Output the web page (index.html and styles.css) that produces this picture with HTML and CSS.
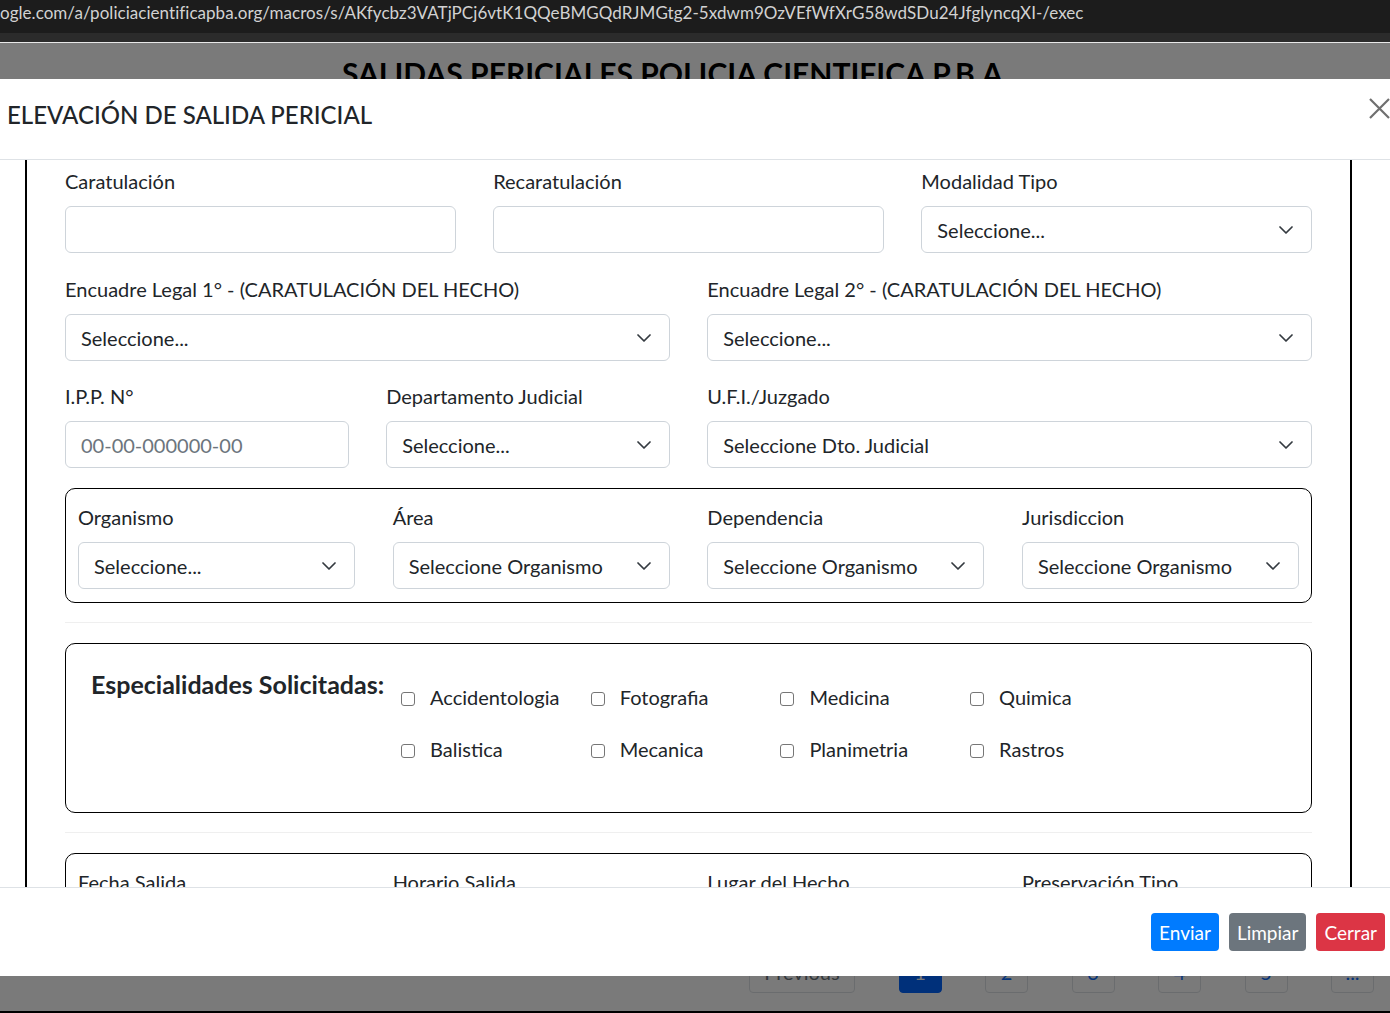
FILE: index.html
```html
<!DOCTYPE html>
<html lang="es">
<head>
<meta charset="utf-8">
<title>Elevación de Salida Pericial</title>
<link rel="stylesheet" href="styles.css">
</head>
<body>
<div class="urlbar"><span class="url">ogle.com/a/policiacientificapba.org/macros/s/AKfycbz3VATjPCj6vtK1QQeBMGQdRJMGtg2-5xdwm9OzVEfWfXrG58wdSDu24JfglyncqXI-/exec</span></div>
<div class="tabstrip"></div>
<div class="viewport">
  <div class="page">
    <h1 class="page-title">SALIDAS PERICIALES POLICIA CIENTIFICA P.B.A</h1>
    <nav class="pagination">
      <span class="pg pg-prev">Previous</span>
      <span class="pg pg-active">1</span>
      <span class="pg">2</span>
      <span class="pg">3</span>
      <span class="pg">4</span>
      <span class="pg">5</span>
      <span class="pg">...</span>
    </nav>
  </div>
  <div class="backdrop"></div>
  <div class="modal">
    <div class="modal-header">
      <h5 class="modal-title">ELEVACIÓN DE SALIDA PERICIAL</h5>
      <span class="close"><svg width="21" height="21" viewBox="0 0 21 21"><path d="M1 1 L20 20 M20 1 L1 20" stroke="#6f6f6f" stroke-width="2.2" fill="none"/></svg></span>
    </div>
    <div class="modal-body">
      <div class="frame">
        <div class="grid g3">
          <div class="field"><label class="lbl">Caratulación</label><div class="ctrl"></div></div>
          <div class="field"><label class="lbl">Recaratulación</label><div class="ctrl"></div></div>
          <div class="field"><label class="lbl">Modalidad Tipo</label><div class="ctrl sel"><span>Seleccione...</span><svg class="chev" width="14" height="8" viewBox="0 0 14 8"><path d="M1 1 L7 7 L13 1" stroke="#343a40" stroke-width="1.7" fill="none" stroke-linecap="round" stroke-linejoin="round"/></svg></div></div>
        </div>
        <div class="grid g2">
          <div class="field"><label class="lbl">Encuadre Legal 1° - (CARATULACIÓN DEL HECHO)</label><div class="ctrl sel"><span>Seleccione...</span><svg class="chev" width="14" height="8" viewBox="0 0 14 8"><path d="M1 1 L7 7 L13 1" stroke="#343a40" stroke-width="1.7" fill="none" stroke-linecap="round" stroke-linejoin="round"/></svg></div></div>
          <div class="field"><label class="lbl">Encuadre Legal 2° - (CARATULACIÓN DEL HECHO)</label><div class="ctrl sel"><span>Seleccione...</span><svg class="chev" width="14" height="8" viewBox="0 0 14 8"><path d="M1 1 L7 7 L13 1" stroke="#343a40" stroke-width="1.7" fill="none" stroke-linecap="round" stroke-linejoin="round"/></svg></div></div>
        </div>
        <div class="grid g4">
          <div class="field"><label class="lbl">I.P.P. N°</label><div class="ctrl"><span class="ph">00-00-000000-00</span></div></div>
          <div class="field"><label class="lbl">Departamento Judicial</label><div class="ctrl sel"><span>Seleccione...</span><svg class="chev" width="14" height="8" viewBox="0 0 14 8"><path d="M1 1 L7 7 L13 1" stroke="#343a40" stroke-width="1.7" fill="none" stroke-linecap="round" stroke-linejoin="round"/></svg></div></div>
          <div class="field span2"><label class="lbl">U.F.I./Juzgado</label><div class="ctrl sel"><span>Seleccione Dto. Judicial</span><svg class="chev" width="14" height="8" viewBox="0 0 14 8"><path d="M1 1 L7 7 L13 1" stroke="#343a40" stroke-width="1.7" fill="none" stroke-linecap="round" stroke-linejoin="round"/></svg></div></div>
        </div>
        <div class="box">
          <div class="grid g4 inner">
            <div class="field"><label class="lbl">Organismo</label><div class="ctrl sel"><span>Seleccione...</span><svg class="chev" width="14" height="8" viewBox="0 0 14 8"><path d="M1 1 L7 7 L13 1" stroke="#343a40" stroke-width="1.7" fill="none" stroke-linecap="round" stroke-linejoin="round"/></svg></div></div>
            <div class="field"><label class="lbl">Área</label><div class="ctrl sel"><span>Seleccione Organismo</span><svg class="chev" width="14" height="8" viewBox="0 0 14 8"><path d="M1 1 L7 7 L13 1" stroke="#343a40" stroke-width="1.7" fill="none" stroke-linecap="round" stroke-linejoin="round"/></svg></div></div>
            <div class="field"><label class="lbl">Dependencia</label><div class="ctrl sel"><span>Seleccione Organismo</span><svg class="chev" width="14" height="8" viewBox="0 0 14 8"><path d="M1 1 L7 7 L13 1" stroke="#343a40" stroke-width="1.7" fill="none" stroke-linecap="round" stroke-linejoin="round"/></svg></div></div>
            <div class="field"><label class="lbl">Jurisdiccion</label><div class="ctrl sel"><span>Seleccione Organismo</span><svg class="chev" width="14" height="8" viewBox="0 0 14 8"><path d="M1 1 L7 7 L13 1" stroke="#343a40" stroke-width="1.7" fill="none" stroke-linecap="round" stroke-linejoin="round"/></svg></div></div>
          </div>
        </div>
        <hr class="sep">
        <div class="box spec">
          <h5 class="spec-title">Especialidades Solicitadas:</h5>
          <div class="spec-grid">
            <div class="check"><span class="cb"></span>Accidentologia</div>
            <div class="check"><span class="cb"></span>Fotografia</div>
            <div class="check"><span class="cb"></span>Medicina</div>
            <div class="check"><span class="cb"></span>Quimica</div>
            <div class="check"><span class="cb"></span>Balistica</div>
            <div class="check"><span class="cb"></span>Mecanica</div>
            <div class="check"><span class="cb"></span>Planimetria</div>
            <div class="check"><span class="cb"></span>Rastros</div>
          </div>
        </div>
        <hr class="sep">
        <div class="box">
          <div class="grid g4 inner">
            <div class="field"><label class="lbl">Fecha Salida</label><div class="ctrl"></div></div>
            <div class="field"><label class="lbl">Horario Salida</label><div class="ctrl"></div></div>
            <div class="field"><label class="lbl">Lugar del Hecho</label><div class="ctrl"></div></div>
            <div class="field"><label class="lbl">Preservación Tipo</label><div class="ctrl"></div></div>
          </div>
        </div>
      </div>
    </div>
    <div class="modal-footer">
      <span class="btn btn-primary">Enviar</span>
      <span class="btn btn-secondary">Limpiar</span>
      <span class="btn btn-danger">Cerrar</span>
    </div>
  </div>
</div>
<div class="bottom-edge"></div>
</body>
</html>
```
FILE: styles.css
```css
* { box-sizing: border-box; }
html, body { margin: 0; padding: 0; }
body {
  width: 1390px;
  height: 1013px;
  overflow: hidden;
  background: #000;
  font-family: Lato, "Noto Sans", sans-serif;
  color: #212529;
}
.urlbar {
  height: 33px;
  background: #1c1c1c;
  color: #d2d2d2;
  font-size: 17px;
  line-height: 26px;
  letter-spacing: 0.04px;
  white-space: nowrap;
  overflow: hidden;
}
.tabstrip {
  height: 10px;
  background: #2b2b2b;
  border-bottom: 1px solid #e8e8e8;
}
.viewport {
  position: relative;
  height: 968px;
  overflow: hidden;
}
.page {
  height: 100%;
  background: #fff;
  display: flex;
  flex-direction: column;
}
.page-title {
  margin: 12px 0 0 342px;
  font-size: 30px;
  line-height: 1.2;
  font-weight: 700;
  color: #000;
  white-space: nowrap;
}
.pagination {
  margin: auto 0 18px 749px;
  display: flex;
  gap: 43.5px;
}
.pg {
  width: 43px;
  height: 43px;
  border: 1px solid #dee2e6;
  border-radius: 4px;
  color: #0d6efd;
  font-size: 20px;
  display: flex;
  align-items: center;
  justify-content: center;
}
.pg-prev { width: 106px; color: #6c757d; }
.pg-active { background: #0064ff; border-color: #0064ff; color: #fff; }
.backdrop {
  position: absolute;
  inset: 0;
  background: rgba(0, 0, 0, 0.52);
}
.modal {
  position: absolute;
  top: 36px;
  left: 0;
  width: 1390px;
  height: 897px;
  background: #fff;
  display: flex;
  flex-direction: column;
}
.modal-header {
  height: 81px;
  flex-shrink: 0;
  border-bottom: 1px solid #dee2e6;
  display: flex;
  align-items: flex-start;
  padding-left: 7px;
}
.modal-title {
  margin: 21px 0 0;
  font-size: 24px;
  line-height: 30px;
  font-weight: 500;
  color: #212529;
}
.close {
  margin: 19px 0 0 auto;
  width: 21px;
  height: 21px;
  display: block;
}
.close svg { display: block; }
.modal-body {
  flex: 1;
  overflow: hidden;
}
.frame {
  margin-left: 25px;
  width: 1327px;
  min-height: 100%;
  border-left: 2px solid #000;
  border-right: 2px solid #000;
  padding: 6px 38px 0;
}
.grid { display: grid; column-gap: 37.5px; margin-bottom: 20px; }
.grid.g3 { margin-bottom: 21px; }
.g3 { grid-template-columns: repeat(3, 1fr); }
.g2 { grid-template-columns: repeat(2, 1fr); }
.g4 { grid-template-columns: repeat(4, 1fr); }
.span2 { grid-column: span 2; }
.grid.inner { margin-bottom: 0; column-gap: 37.67px; }
.lbl {
  display: block;
  font-size: 20px;
  line-height: 30px;
  margin-bottom: 10px;
  white-space: nowrap;
}
.ctrl {
  height: 47px;
  border: 1px solid #ced4da;
  border-radius: 6px;
  padding: 0 15px;
  font-size: 20px;
  display: flex;
  align-items: center;
  background: #fff;
}
.sel { justify-content: space-between; }
.chev { flex-shrink: 0; display: block; margin-right: 3px; }
.ph { color: #6c757d; }
.box {
  border: 1px solid #000;
  border-radius: 10px;
  padding: 13px 12px 13px;
}
.sep {
  margin: 19px 0 20px;
  border: 0;
  border-top: 1px solid #efefef;
  height: 0;
}
.spec {
  display: flex;
  align-items: flex-start;
  padding: 25px 25px 48px;
}
.spec-title {
  margin: 0;
  width: 310px;
  flex-shrink: 0;
  font-size: 25px;
  line-height: 30px;
  font-weight: 700;
  white-space: nowrap;
}
.spec-grid {
  margin-top: 13px;
  display: grid;
  grid-template-columns: repeat(4, 189.7px);
  row-gap: 22px;
}
.check {
  display: flex;
  align-items: center;
  height: 30px;
  font-size: 20px;
}
.cb {
  width: 14px;
  height: 14px;
  border: 1px solid #767676;
  border-radius: 3px;
  margin: 4px 15px 0 0;
  background: #fff;
}
.modal-footer {
  height: 89px;
  flex-shrink: 0;
  border-top: 1px solid #dee2e6;
  display: flex;
  justify-content: flex-end;
  align-items: center;
  gap: 10px;
  padding-right: 5px;
}
.btn {
  height: 38px;
  padding: 0 8px;
  border-radius: 4px;
  color: #fff;
  font-size: 19px;
  display: flex;
  align-items: center;
  justify-content: center;
}
.btn-primary { background: #007bff; }
.btn-secondary { background: #6c757d; }
.btn-danger { background: #dc3545; }
.btn-spacer { display: none; }
.bottom-edge { height: 2px; background: #000; }
```
